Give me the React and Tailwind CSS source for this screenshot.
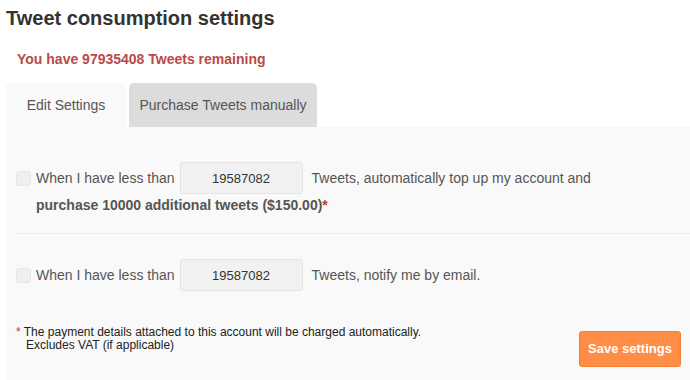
import React, { useState } from 'react';

const font = { fontFamily: '"Liberation Sans", Arial, sans-serif' };

const Checkbox = ({ checked, onChange }) => (
  <button
    type="button"
    onClick={onChange}
    className={`w-[15px] h-[15px] rounded-[3px] border border-[#e6e6e6] shrink-0 ${checked ? 'bg-[#d9d9d9]' : 'bg-[#efefef]'}`}
  />
);

const CountInput = ({ value }) => (
  <input
    defaultValue={value}
    className="w-[123px] h-[32px] mx-[5px] rounded-[3px] border border-[#e4e4e4] bg-[#f1f1f1] text-center text-[13px] text-[#333] outline-none"
    style={font}
  />
);

export default function App() {
  const [tab, setTab] = useState('edit');
  const [topUp, setTopUp] = useState(false);
  const [notify, setNotify] = useState(false);

  return (
    <div className="w-[690px] h-[380px] bg-white overflow-hidden" style={font}>
      <h1 className="pl-[6px] pt-[6px] text-[20px] leading-[24px] font-bold text-[#333]">
        Tweet consumption settings
      </h1>
      <p className="pl-[17px] mt-[21px] text-[14px] leading-[16px] font-bold text-[#b94a48]">
        You have 97935408 Tweets remaining
      </p>

      {/* Tabs */}
      <div className="flex items-end pl-[6px] mt-[16px] gap-[3px]">
        <button
          onClick={() => setTab('edit')}
          className="w-[120px] h-[44px] rounded-t-[5px] bg-[#f9f9f9] text-[14px] text-[#555]"
        >
          Edit Settings
        </button>
        <button
          onClick={() => setTab('purchase')}
          className="w-[188px] h-[44px] rounded-t-[5px] bg-[#dcdcdc] text-[14px] text-[#555]"
        >
          Purchase Tweets manually
        </button>
      </div>

      {/* Panel */}
      <div className="ml-[6px] bg-[#f9f9f9] h-[253px] pl-[10px] pt-[35px] text-[14px] text-[#555]">
        <div className="flex items-center">
          <Checkbox checked={topUp} onChange={() => setTopUp(!topUp)} />
          <span className="ml-[5px]">When I have less than</span>
          <CountInput value="19587082" />
          <span className="ml-[4px]">Tweets, automatically top up my account and</span>
        </div>
        <p className="pl-[20px] mt-[1px] font-bold leading-[20px]">
          purchase 10000 additional tweets ($150.00)<span className="text-[#c0392b]">*</span>
        </p>

        <div className="border-t border-[#ebebeb] mt-[18px]" />

        <div className="flex items-center mt-[25px]">
          <Checkbox checked={notify} onChange={() => setNotify(!notify)} />
          <span className="ml-[5px]">When I have less than</span>
          <CountInput value="19587082" />
          <span className="ml-[4px]">Tweets, notify me by email.</span>
        </div>

        <div className="flex justify-between items-start mt-[30px] pr-[9px]">
          <div className="text-[12px] leading-[13px] text-[#222] pt-[5px]">
            <div>
              <span className="text-[#c0392b]">*</span> The payment details attached to this account will be charged automatically.
            </div>
            <div className="pl-[10px]">Excludes VAT (if applicable)</div>
          </div>
          <button className="mt-[10px] w-[102px] h-[36px] rounded-[3px] bg-[#ff8d45] border border-[#f57f30] text-white text-[13px] font-bold">
            Save settings
          </button>
        </div>
      </div>
    </div>
  );
}
